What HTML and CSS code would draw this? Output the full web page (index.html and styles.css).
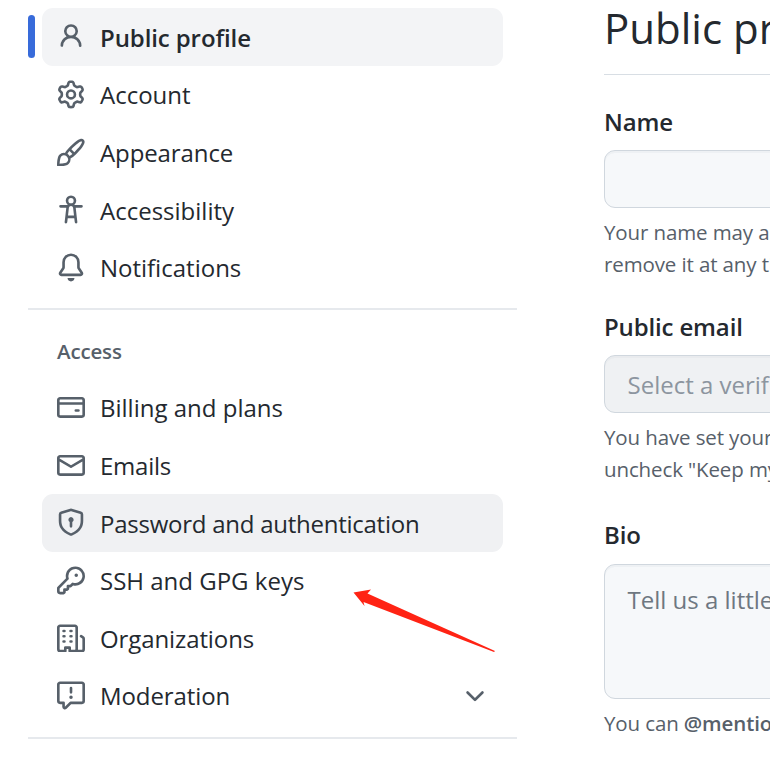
FILE: index.html
```html
<!DOCTYPE html>
<html lang="en">
<head>
<meta charset="utf-8">
<title>Public profile</title>
<link rel="stylesheet" href="styles.css">
</head>
<body>
<div class="page">
  <nav class="sidebar">
    <ul class="nav-list">
      <li class="nav-item active">
        <svg class="icon" viewBox="0 0 16 16"><path d="M10.561 8.073a6.005 6.005 0 0 1 3.432 5.142.75.75 0 1 1-1.498.07 4.5 4.5 0 0 0-8.99 0 .75.75 0 0 1-1.498-.07 6.004 6.004 0 0 1 3.431-5.142 3.999 3.999 0 1 1 5.123 0ZM10.5 5a2.5 2.5 0 1 0-5 0 2.5 2.5 0 0 0 5 0Z"/></svg>
        <span class="label snug low">Public profile</span>
      </li>
      <li class="nav-item">
        <svg class="icon" viewBox="0 0 16 16"><path d="M8 0a8.2 8.2 0 0 1 .701.031C9.444.095 9.99.645 10.16 1.29l.288 1.107c.018.066.079.158.212.224.231.114.454.243.668.386.123.082.233.09.299.071l1.103-.303c.644-.176 1.392.021 1.82.63.27.385.506.792.704 1.218.315.675.111 1.422-.364 1.891l-.814.806c-.049.048-.098.147-.088.294.016.257.016.515 0 .772-.01.147.038.246.088.294l.814.806c.475.469.679 1.216.364 1.891a7.977 7.977 0 0 1-.704 1.217c-.428.61-1.176.807-1.82.63l-1.102-.302c-.067-.019-.177-.011-.3.071a5.909 5.909 0 0 1-.668.386c-.133.066-.194.158-.211.224l-.29 1.106c-.168.646-.715 1.196-1.458 1.26a8.006 8.006 0 0 1-1.402 0c-.743-.064-1.289-.614-1.458-1.26l-.289-1.106c-.018-.066-.079-.158-.212-.224a5.738 5.738 0 0 1-.668-.386c-.123-.082-.233-.09-.299-.071l-1.103.303c-.644.176-1.392-.021-1.82-.63a8.12 8.12 0 0 1-.704-1.218c-.315-.675-.111-1.422.363-1.891l.815-.806c.05-.048.098-.147.088-.294a6.214 6.214 0 0 1 0-.772c.01-.147-.038-.246-.088-.294l-.815-.806C.635 6.045.431 5.298.746 4.623a7.92 7.92 0 0 1 .704-1.217c.428-.61 1.176-.807 1.82-.63l1.102.302c.067.019.177.011.3-.071.214-.143.437-.272.668-.386.133-.066.194-.158.211-.224l.29-1.106C6.009.645 6.556.095 7.299.03 7.53.01 7.764 0 8 0Zm-.571 1.525c-.036.003-.108.036-.137.146l-.289 1.105c-.147.561-.549.967-.998 1.189-.173.086-.34.183-.5.29-.417.278-.97.423-1.529.27l-1.103-.303c-.109-.03-.175.016-.195.045-.22.312-.412.644-.573.99-.014.031-.021.11.059.19l.815.806c.411.406.562.957.53 1.456a4.709 4.709 0 0 0 0 .582c.032.499-.119 1.05-.53 1.456l-.815.806c-.081.08-.073.159-.059.19.162.346.353.677.573.989.02.03.085.076.195.046l1.102-.303c.56-.153 1.113-.008 1.53.27.161.107.328.204.501.29.447.222.85.629.997 1.189l.289 1.105c.029.109.101.143.137.146a6.6 6.6 0 0 0 1.142 0c.036-.003.108-.036.137-.146l.289-1.105c.147-.561.549-.967.998-1.189.173-.086.34-.183.5-.29.417-.278.97-.423 1.529-.27l1.103.303c.109.029.175-.016.195-.045.22-.313.411-.644.573-.99.014-.031.021-.11-.059-.19l-.815-.806c-.411-.406-.562-.957-.53-1.456a4.709 4.709 0 0 0 0-.582c-.032-.499.119-1.05.53-1.456l.815-.806c.081-.08.073-.159.059-.19a6.464 6.464 0 0 0-.573-.989c-.02-.03-.085-.076-.195-.046l-1.102.303c-.56.153-1.113.008-1.53-.27a4.44 4.44 0 0 0-.501-.29c-.447-.222-.85-.629-.997-1.189l-.289-1.105c-.029-.11-.101-.143-.137-.146a6.6 6.6 0 0 0-1.142 0ZM11 8a3 3 0 1 1-6 0 3 3 0 0 1 6 0ZM9.5 8a1.5 1.5 0 1 0-3.001.001A1.5 1.5 0 0 0 9.5 8Z"/></svg>
        <span class="label">Account</span>
      </li>
      <li class="nav-item">
        <svg class="icon" viewBox="0 0 16 16"><path d="M11.134 1.535c.7-.509 1.416-.942 2.076-1.155.649-.21 1.463-.267 2.069.34.603.601.568 1.411.368 2.07-.202.668-.624 1.39-1.125 2.096-1.011 1.424-2.496 2.987-3.775 4.249-1.098 1.084-2.132 1.839-3.04 2.3a3.744 3.744 0 0 1-1.055 3.217c-.431.431-1.065.691-1.657.861-.614.177-1.294.287-1.914.357A21.151 21.151 0 0 1 .797 16H.743l.007-.75H.749L.742 16a.75.75 0 0 1-.743-.742l.743-.008-.742.007v-.054a21.25 21.25 0 0 1 .13-2.284c.067-.647.187-1.287.358-1.914.17-.591.43-1.226.86-1.657a3.746 3.746 0 0 1 3.227-1.054c.466-.893 1.225-1.907 2.314-2.982 1.271-1.255 2.833-2.75 4.245-3.777ZM1.62 13.089c-.051.464-.086.929-.104 1.395.466-.018.932-.053 1.396-.104a10.511 10.511 0 0 0 1.668-.309c.526-.151.856-.325 1.011-.48a2.25 2.25 0 1 0-3.182-3.182c-.155.155-.329.485-.48 1.01a10.515 10.515 0 0 0-.309 1.67Zm10.396-10.34c-1.224.89-2.605 2.189-3.822 3.384l1.718 1.718c1.21-1.205 2.51-2.597 3.387-3.833.47-.662.78-1.227.912-1.662.134-.444.032-.551.009-.575h-.001V1.78c-.014-.014-.113-.113-.548.027-.432.14-.995.462-1.655.942Zm-4.832 7.266-.001.001a9.859 9.859 0 0 0 1.63-1.142L7.155 7.216a9.7 9.7 0 0 0-1.161 1.607c.482.302.889.71 1.19 1.192Z"/></svg>
        <span class="label snug low">Appearance</span>
      </li>
      <li class="nav-item">
        <svg class="icon" viewBox="0 0 16 16"><path d="M9.923 5.302c.063.063.122.129.178.198H14A.75.75 0 0 1 14 7h-3.3l.578 5.163.362 2.997a.75.75 0 0 1-1.49.18L9.868 13H6.132l-.282 2.34a.75.75 0 0 1-1.49-.18l.362-2.997L5.3 7H2a.75.75 0 0 1 0-1.5h3.9a2.54 2.54 0 0 1 .176-.198 3 3 0 1 1 3.847 0ZM9.2 7.073h-.001a1.206 1.206 0 0 0-2.398 0L6.3 11.5h3.4ZM9.5 3a1.5 1.5 0 1 0-3.001.001A1.5 1.5 0 0 0 9.5 3Z"/></svg>
        <span class="label low">Accessibility</span>
      </li>
      <li class="nav-item">
        <svg class="icon" viewBox="0 0 16 16"><path d="M8 16a2 2 0 0 0 1.985-1.75c.017-.137-.097-.25-.235-.25h-3.5c-.138 0-.252.113-.235.25A2 2 0 0 0 8 16ZM3 5a5 5 0 0 1 10 0v2.947c0 .05.015.098.042.139l1.703 2.555A1.519 1.519 0 0 1 13.482 13H2.518a1.516 1.516 0 0 1-1.263-2.36l1.703-2.554A.255.255 0 0 0 3 7.947Zm5-3.5A3.5 3.5 0 0 0 4.5 5v2.947c0 .346-.102.683-.294.97l-1.703 2.556a.017.017 0 0 0-.003.01l.001.006c0 .002.002.004.004.006l.006.004.007.001h10.964l.007-.001.006-.004.004-.006.001-.007a.017.017 0 0 0-.003-.01l-1.703-2.554a1.745 1.745 0 0 1-.294-.97V5A3.5 3.5 0 0 0 8 1.5Z"/></svg>
        <span class="label">Notifications</span>
      </li>
    </ul>
    <hr class="divider">
    <h2 class="group-title">Access</h2>
    <ul class="nav-list">
      <li class="nav-item">
        <svg class="icon" viewBox="0 0 16 16"><path d="M10.75 9a.75.75 0 0 0 0 1.5h1.5a.75.75 0 0 0 0-1.5h-1.5ZM0 3.75C0 2.784.784 2 1.75 2h12.5c.966 0 1.75.784 1.75 1.75v8.5A1.75 1.75 0 0 1 14.25 14H1.75A1.75 1.75 0 0 1 0 12.25ZM14.5 6.5h-13v5.75c0 .138.112.25.25.25h12.5a.25.25 0 0 0 .25-.25Zm0-2.75a.25.25 0 0 0-.25-.25H1.75a.25.25 0 0 0-.25.25V5h13Z"/></svg>
        <span class="label">Billing and plans</span>
      </li>
      <li class="nav-item">
        <svg class="icon" viewBox="0 0 16 16"><path d="M1.75 2h12.5c.966 0 1.75.784 1.75 1.75v8.5A1.75 1.75 0 0 1 14.25 14H1.75A1.75 1.75 0 0 1 0 12.25v-8.5C0 2.784.784 2 1.75 2ZM1.5 12.251c0 .138.112.25.25.25h12.5a.25.25 0 0 0 .25-.25V5.809L8.38 9.397a.75.75 0 0 1-.76 0L1.5 5.809v6.442Zm13-8.181v-.32a.25.25 0 0 0-.25-.25H1.75a.25.25 0 0 0-.25.25v.32L8 7.88Z"/></svg>
        <span class="label tight">Emails</span>
      </li>
      <li class="nav-item hovered">
        <svg class="icon" viewBox="0 0 16 16"><path d="m8.533.133 5.25 1.68A1.75 1.75 0 0 1 15 3.48V7c0 1.566-.32 3.182-1.303 4.682-.983 1.498-2.585 2.813-5.032 3.855a1.697 1.697 0 0 1-1.33 0c-2.447-1.042-4.049-2.357-5.032-3.855C1.32 10.182 1 8.566 1 7V3.48a1.75 1.75 0 0 1 1.217-1.667l5.25-1.68a1.748 1.748 0 0 1 1.066 0Zm-.61 1.429.001.001-5.25 1.68a.251.251 0 0 0-.174.237V7c0 1.36.275 2.666 1.057 3.859.784 1.194 2.121 2.342 4.366 3.298a.196.196 0 0 0 .154 0c2.245-.957 3.582-2.103 4.366-3.297C13.225 9.666 13.5 8.358 13.5 7V3.48a.25.25 0 0 0-.174-.238l-5.25-1.68a.25.25 0 0 0-.153 0ZM9.5 6.5c0 .536-.286 1.032-.75 1.3v2.45a.75.75 0 0 1-1.5 0V7.8A1.5 1.5 0 1 1 9.5 6.5Z"/></svg>
        <span class="label tight low">Password and authentication</span>
      </li>
      <li class="nav-item">
        <svg class="icon" viewBox="0 0 16 16"><path d="M10.5 0a5.499 5.499 0 1 1-1.288 10.848l-.932.932a.749.749 0 0 1-.53.22H7v.75a.749.749 0 0 1-.22.53l-.5.5a.749.749 0 0 1-.53.22H5v.75a.749.749 0 0 1-.22.53l-.5.5a.749.749 0 0 1-.53.22h-2A1.75 1.75 0 0 1 0 14.25v-2c0-.199.079-.389.22-.53l4.932-4.932A5.5 5.5 0 0 1 10.5 0Zm-4 5.5c-.001.431.069.86.205 1.269a.75.75 0 0 1-.181.768L1.5 12.56v1.69c0 .138.112.25.25.25h1.69l.06-.06v-1.19a.75.75 0 0 1 .75-.75h1.19l.06-.06v-1.19a.75.75 0 0 1 .75-.75h1.19l1.023-1.025a.75.75 0 0 1 .768-.18A4 4 0 1 0 6.5 5.5ZM11 6a1 1 0 1 1 0-2 1 1 0 0 1 0 2Z"/></svg>
        <span class="label">SSH and GPG keys</span>
        <svg class="arrow" viewBox="0 0 144 66"><path d="M1.500 3.500 19 .5 15.500 4.500 143 62 142 63 11.500 13 12.500 17Z"/></svg>
      </li>
      <li class="nav-item">
        <svg class="icon" viewBox="0 0 16 16"><path d="M1.750 16A1.750 1.750 0 0 1 0 14.250V1.750C0 .784.784 0 1.750 0h8.500C11.216 0 12 .784 12 1.750v12.500c0 .085-.006.168-.018.250h2.268a.25.25 0 0 0 .25-.25V8.285a.25.25 0 0 0-.111-.208l-1.055-.703a.749.749 0 1 1 .832-1.248l1.055.703c.487.325.779.871.779 1.456v5.965A1.750 1.750 0 0 1 14.250 16h-3.500a.766.766 0 0 1-.197-.026c-.099.017-.2.026-.303.026h-3a.75.75 0 0 1-.75-.75V14h-1v1.250a.75.75 0 0 1-.75.75Zm-.25-1.750c0 .138.112.25.25.25H4v-1.250a.75.75 0 0 1 .75-.75h2.500a.75.75 0 0 1 .75.75v1.250h2.250a.25.25 0 0 0 .25-.25V1.750a.25.25 0 0 0-.25-.25h-8.500a.25.25 0 0 0-.25.25ZM3.750 3h.5a.75.75 0 0 1 0 1.500h-.5a.75.75 0 0 1 0-1.500ZM3.750 6h.5a.75.75 0 0 1 0 1.500h-.5a.75.75 0 0 1 0-1.500ZM3.750 9h.5a.75.75 0 0 1 0 1.500h-.5a.75.75 0 0 1 0-1.500ZM7.750 3h.5a.75.75 0 0 1 0 1.500h-.5a.75.75 0 0 1 0-1.500ZM7.750 6h.5a.75.75 0 0 1 0 1.500h-.5a.75.75 0 0 1 0-1.500ZM7.750 9h.5a.75.75 0 0 1 0 1.500h-.5a.75.75 0 0 1 0-1.500Z"/></svg>
        <span class="label snug">Organizations</span>
      </li>
      <li class="nav-item">
        <svg class="icon" viewBox="0 0 16 16"><path d="M0 1.750C0 .784.784 0 1.750 0h12.500C15.216 0 16 .784 16 1.750v9.500A1.750 1.750 0 0 1 14.250 13H8.060l-2.573 2.573A1.458 1.458 0 0 1 3 14.543V13H1.750A1.750 1.750 0 0 1 0 11.250Zm1.750-.25a.25.25 0 0 0-.25.25v9.500c0 .138.112.25.25.25h2a.75.75 0 0 1 .75.75v2.190l2.720-2.720a.749.749 0 0 1 .53-.22h6.500a.25.25 0 0 0 .25-.25v-9.500a.25.25 0 0 0-.25-.25Zm7 2.250v2.500a.75.75 0 0 1-1.500 0v-2.500a.75.75 0 0 1 1.500 0ZM9 9a1 1 0 1 1-2 0 1 1 0 0 1 2 0Z"/></svg>
        <span class="label snug">Moderation</span>
        <svg class="icon chevron" viewBox="0 0 16 16"><path d="M12.780 5.220a.749.749 0 0 1 0 1.060l-4.250 4.250a.749.749 0 0 1-1.060 0L3.220 6.280a.749.749 0 1 1 1.060-1.060L8 8.939l3.720-3.719a.749.749 0 0 1 1.060 0Z"/></svg>
      </li>
    </ul>
    <hr class="divider last">
  </nav>
  <main class="content">
    <h1 class="title">Public profile</h1>
    <div class="field">
      <div class="field-label">Name</div>
      <div class="control"></div>
      <p class="hint">Your name may appear<br>remove it at any time</p>
    </div>
    <div class="field email">
      <div class="field-label">Public email</div>
      <div class="control disabled">Select a verified email</div>
      <p class="hint">You have set your email<br>uncheck "Keep my email</p>
    </div>
    <div class="field bio">
      <div class="field-label">Bio</div>
      <div class="control area">Tell us a little bit</div>
      <p class="hint">You can <b>@mention</b></p>
    </div>
  </main>
</div>
</body>
</html>
```
FILE: styles.css
```css
* { box-sizing: border-box; }

body {
  margin: 0;
  width: 770px;
  height: 765px;
  overflow: hidden;
  background: #fff;
  color: #24292f;
  font-family: "Open Sans", "Noto Sans", sans-serif;
  font-size: 24px;
}

.page {
  display: flex;
  gap: 87px;
  height: 765px;
  overflow: hidden;
}

.sidebar {
  flex: none;
  width: 517px;
  padding: 8px 0 0 28px;
}

.nav-list {
  list-style: none;
  margin: 0;
  padding: 0 14px;
}

.nav-item {
  position: relative;
  display: flex;
  align-items: center;
  height: 57.6px;
  padding: 0 14.4px 0 15px;
  border-radius: 11px;
  white-space: nowrap;
}

.icon {
  flex: none;
  width: 28px;
  height: 28.8px;
  margin: 0 15px 0 0;
  fill: #57606a;
}

.label {
  padding-top: 1px;
  line-height: 36px;
}

.low { padding-top: 2.600px; }
.snug { letter-spacing: -.1px; }
.tight { letter-spacing: -.25px; }

.active {
  background: #f3f4f6;
  font-weight: 600;
}

.active::before {
  content: "";
  position: absolute;
  left: -14px;
  top: 7px;
  width: 7px;
  height: 43px;
  border-radius: 4px;
  background: #386bda;
}

.hovered { background: #f0f1f3; }

.chevron { margin: 2px 0 0 auto; }

.arrow {
  position: absolute;
  left: 310px;
  top: 37.500px;
  width: 144px;
  height: 66px;
  fill: #ff2314;
}

.divider {
  height: 2px;
  margin: 12px 0 0;
  border: 0;
  background: #e6e9ed;
}

.last { margin-top: 13px; }

.group-title {
  margin: 0;
  padding: 25.500px 0 11px 29px;
  font-size: 20.500px;
  line-height: 32.400px;
  font-weight: 600;
  letter-spacing: -.15px;
  color: #57606a;
}

.content {
  flex: none;
  width: 800px;
}

.title {
  height: 75px;
  margin: 0 0 29px;
  border-bottom: 1px solid #d8dee4;
  font-size: 42px;
  line-height: 56px;
  font-weight: 400;
}

.field { height: 205px; }

.email { height: 208px; }

.field-label {
  height: 36px;
  margin-bottom: 10px;
  line-height: 36px;
  font-weight: 600;
  letter-spacing: -.15px;
}

.bio .field-label { margin-bottom: 11px; }

.control {
  height: 58px;
  padding: 0 22.500px;
  border: 1px solid #d0d7de;
  border-radius: 11px;
  background: #f6f8fa;
  box-shadow: inset 0 2px 0 rgba(208, 215, 222, .2);
  line-height: 58px;
  color: #6e7781;
}

.disabled {
  background: #eff1f3;
  color: #8c959f;
}

.area {
  height: 135px;
  line-height: 70px;
}

.hint {
  margin: 8px 0 0;
  font-size: 20.500px;
  line-height: 32.400px;
  letter-spacing: -.12px;
  color: #57606a;
}

.hint b { font-weight: 600; }
```
